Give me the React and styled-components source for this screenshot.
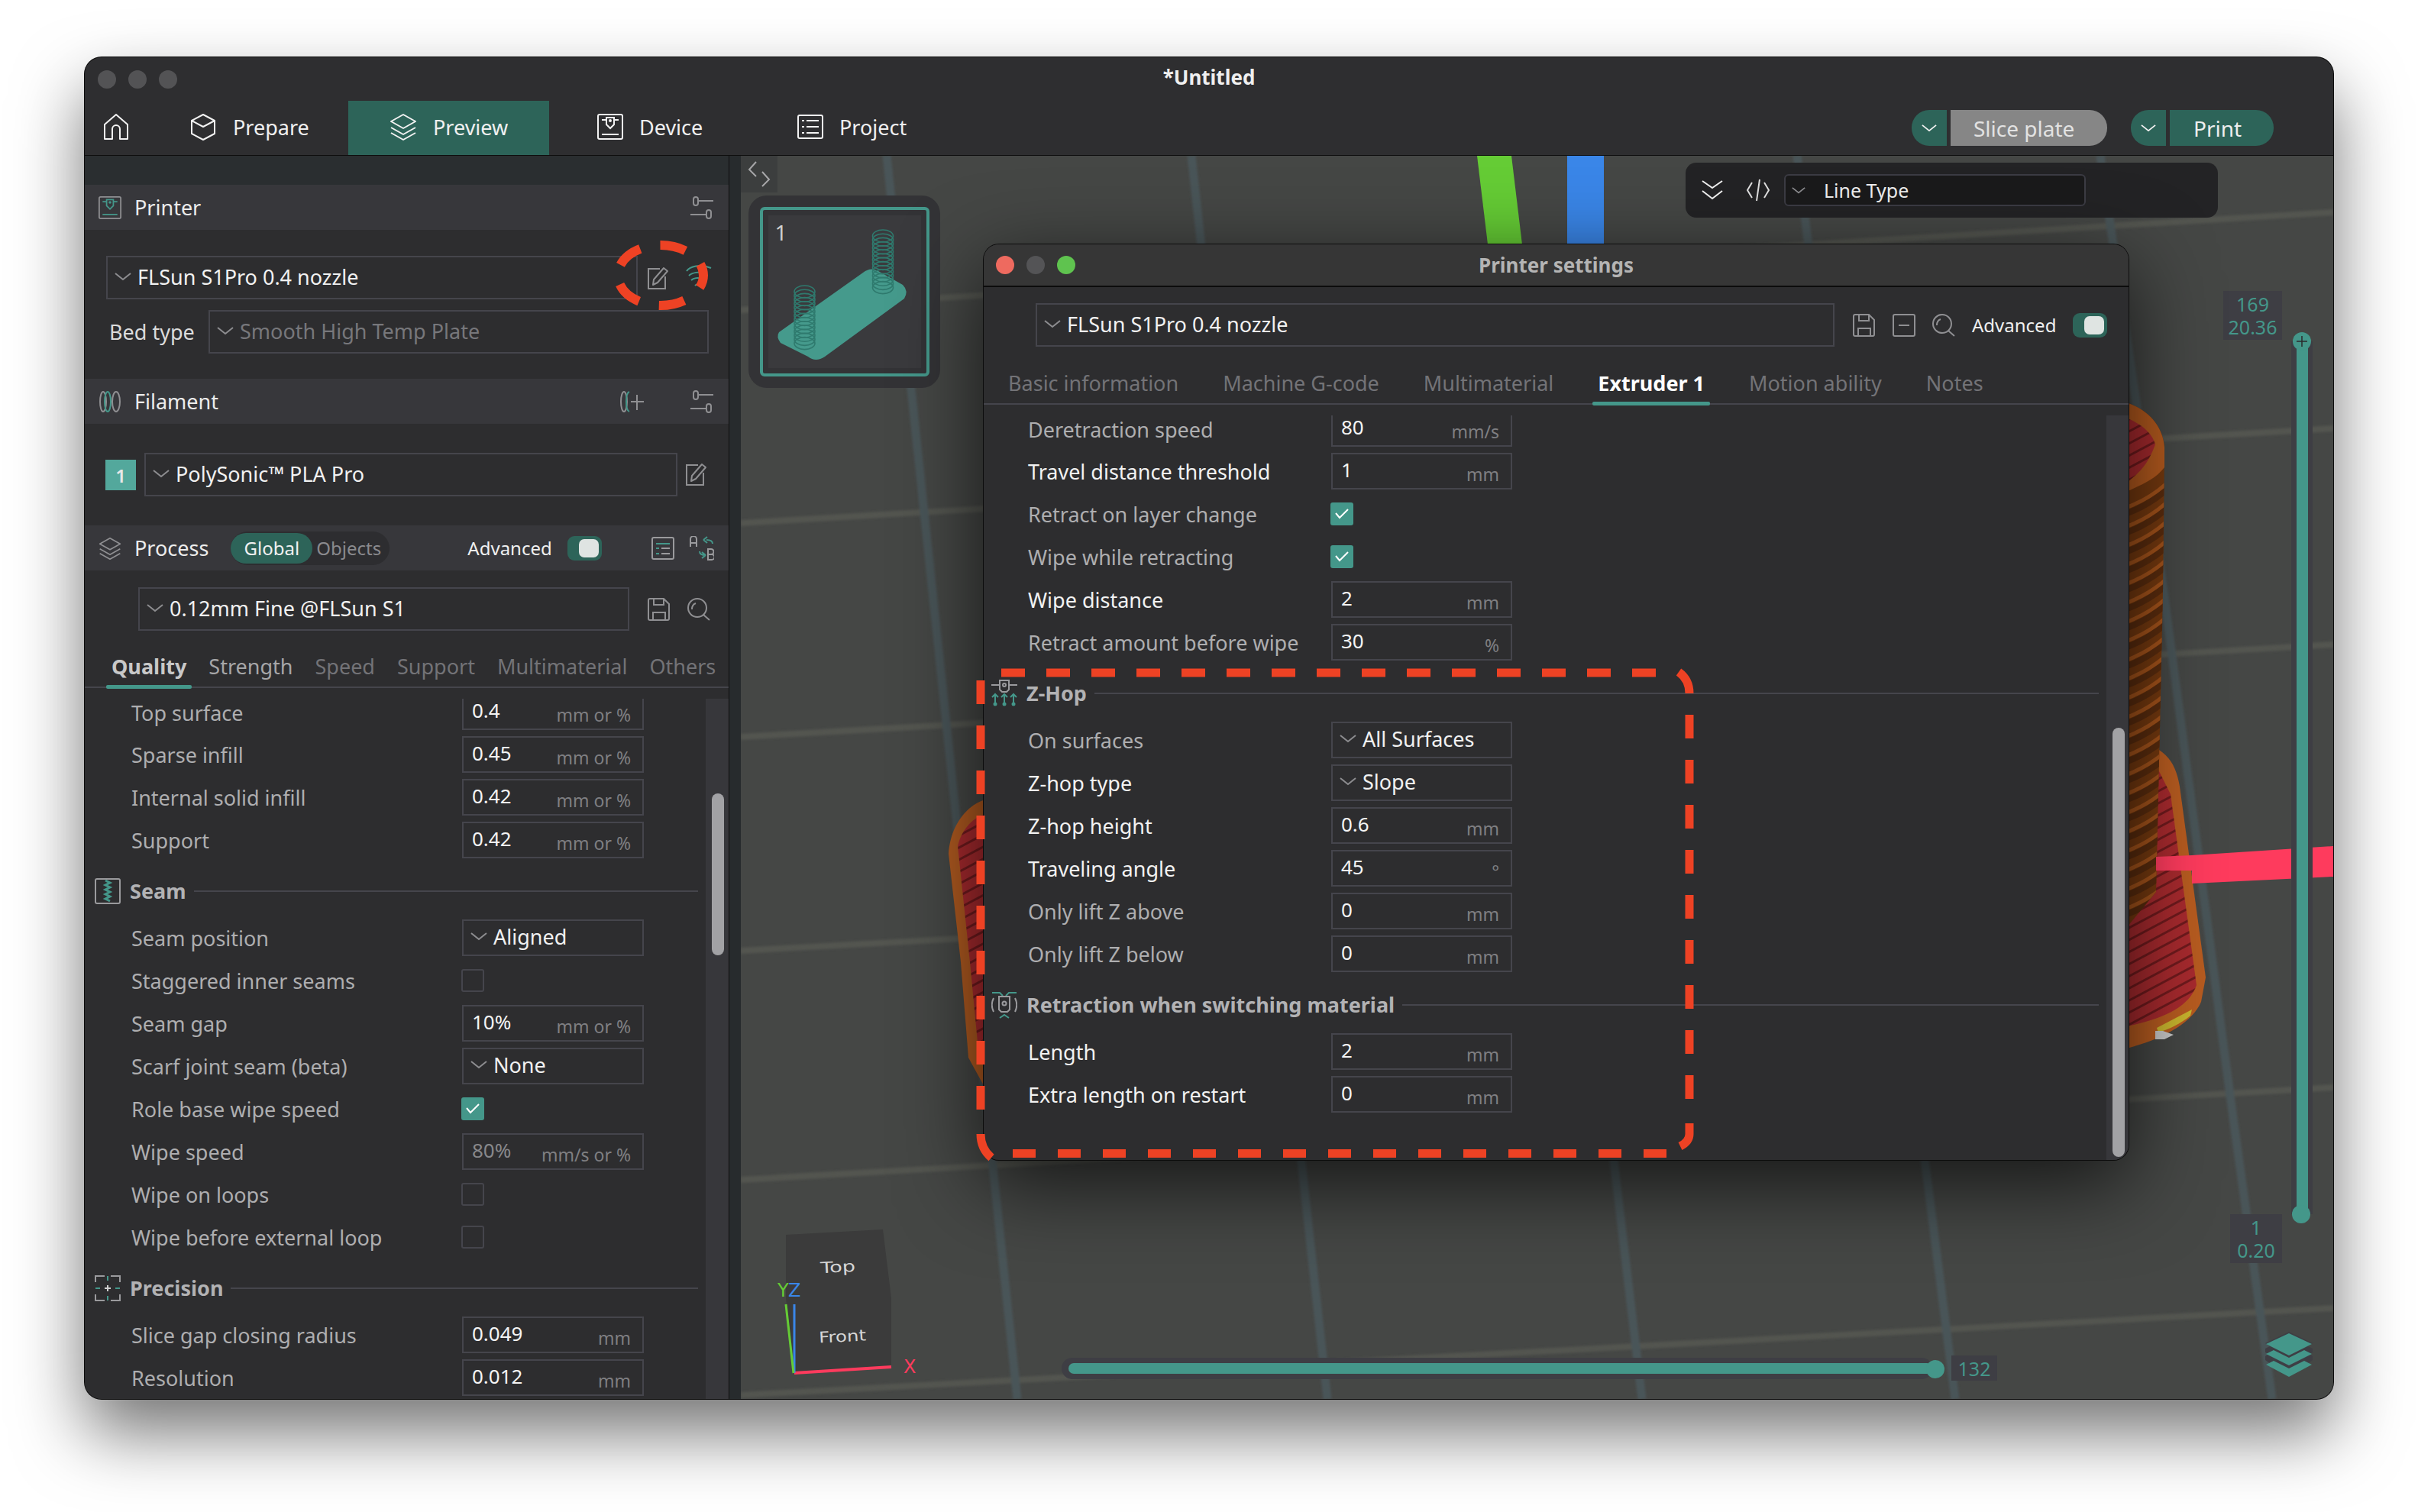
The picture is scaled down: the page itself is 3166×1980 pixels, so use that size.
import React from 'react';
import styled, { createGlobalStyle } from 'styled-components';

const TEAL = '#44978a';
const DEEP_TEAL = '#2d6459';
const LINE = '#45454c';

const GlobalStyle = createGlobalStyle`
  html, body {
    margin: 0;
    background: #fff;
  }
  body {
    font-family: "Noto Sans", "Liberation Sans", sans-serif;
    width: 3166px;
    height: 1980px;
    overflow: hidden;
  }
`;

const Page = styled.div`
  position: relative;
  width: 3166px;
  height: 1980px;
  padding: 75px 111px 148px;
  box-sizing: border-box;
`;

const Window = styled.div`
  height: 100%;
  display: flex;
  flex-direction: column;
  background: #2e2e30;
  border-radius: 22px;
  overflow: hidden;
  box-shadow: 0 0 0 1px #0c0c0c, 0 44px 90px rgba(0, 0, 0, 0.55);
`;

const TitleBar = styled.div`
  height: 57px;
  flex: none;
  display: flex;
  align-items: center;
  position: relative;
  padding-left: 17px;
  gap: 16px;
`;

const TitleText = styled.div`
  position: absolute;
  left: 0;
  right: 0;
  top: 8px;
  text-align: center;
  color: #efefef;
  font-size: 26px;
  font-weight: 700;
`;

const Light = styled.span`
  width: 24px;
  height: 24px;
  border-radius: 50%;
  background: ${(p) => p.$color || '#535355'};
  flex: none;
`;

const Toolbar = styled.div`
  height: 71px;
  flex: none;
  display: flex;
  align-items: stretch;
  border-bottom: 1px solid #0e0e0e;
  padding-left: 23px;
`;

const NavItem = styled.div`
  display: flex;
  align-items: center;
  gap: 21px;
  color: #f0f0f0;
  font-size: 27px;
  width: ${(p) => p.$width}px;
  flex: none;
  box-sizing: border-box;
  padding-left: ${(p) => p.$pad}px;
  padding-bottom: 3px;
  background: ${(p) => (p.$active ? DEEP_TEAL : 'transparent')};
`;

const ToolbarEnd = styled.div`
  margin-left: auto;
  display: flex;
  align-items: center;
  gap: 31px;
  padding-right: 78px;
`;

const SplitButton = styled.div`
  display: flex;
  gap: 5px;
  height: 47px;
`;

const SplitArrow = styled.div`
  width: 46px;
  background: ${DEEP_TEAL};
  border-radius: 23px 0 0 23px;
  display: flex;
  align-items: center;
  justify-content: center;
`;

const SplitLabel = styled.div`
  width: ${(p) => p.$width}px;
  box-sizing: border-box;
  background: ${(p) => (p.$muted ? '#868686' : DEEP_TEAL)};
  color: ${(p) => (p.$muted ? '#e2e2e2' : '#eeeeee')};
  border-radius: 0 23px 23px 0;
  font-size: 28px;
  display: flex;
  align-items: center;
  padding-left: ${(p) => p.$pad}px;
`;

const Main = styled.div`
  flex: 1;
  min-height: 0;
  display: flex;
`;

const Sidebar = styled.div`
  width: 843px;
  flex: none;
  display: flex;
  flex-direction: column;
  background: #2d2d2f;
  border-right: 1px solid #0e0e0e;
  box-sizing: content-box;
`;

const Gutter = styled.div`
  width: 15px;
  flex: none;
  background: #272b2d;
`;

const TopStrip = styled.div`
  height: 38px;
  flex: none;
  background: #2a2e30;
`;

const PanelHeader = styled.div`
  height: 59px;
  flex: none;
  display: flex;
  align-items: center;
  background: #37373b;
  color: #ececec;
  font-size: 27px;
  padding: 0 19px 0 18px;
  gap: 17px;
`;

const HeaderIcons = styled.div`
  margin-left: auto;
  display: flex;
  align-items: center;
  gap: ${(p) => p.$gap || 30}px;
`;

const PrinterBody = styled.div`
  height: 195px;
  flex: none;
  box-sizing: border-box;
  padding: 34px 0 0 28px;
  display: flex;
  flex-direction: column;
  gap: 14px;
`;

const PresetRow = styled.div`
  display: flex;
  align-items: center;
  gap: ${(p) => p.$gap || 0}px;
`;

const SignalSlot = styled.span`
  display: flex;
  margin: -8px 0 0 7px;
`;

const BedLabel = styled.span`
  color: #dcdcdc;
  font-size: 27px;
  width: 130px;
  margin-left: 4px;
  flex: none;
`;

const SelectBox = styled.div`
  width: ${(p) => p.$width}px;
  height: 57px;
  box-sizing: border-box;
  flex: none;
  border: 2px solid ${LINE};
  display: flex;
  align-items: center;
  gap: 8px;
  padding-left: 9px;
  padding-bottom: 3px;
  color: ${(p) => (p.$muted ? '#77777b' : '#f1f1f1')};
  font-size: 27px;
  white-space: nowrap;
`;

const FilamentBody = styled.div`
  height: 133px;
  flex: none;
  box-sizing: border-box;
  padding: 38px 0 0 27px;
  display: flex;
  align-items: flex-start;
`;

const FilamentEdit = styled.span`
  display: flex;
  margin: 13px 0 0 10px;
`;

const Badge = styled.div`
  width: 40px;
  height: 40px;
  margin: 9px 11px 0 0;
  background: #53a89c;
  color: #e8e8e8;
  font-size: 24px;
  font-weight: 600;
  display: flex;
  align-items: center;
  justify-content: center;
`;

const Segmented = styled.div`
  display: flex;
  align-items: center;
  width: 208px;
  height: 44px;
  border-radius: 22px;
  background: #2d2d30;
  font-size: 24px;
  margin-left: 12px;
`;

const SegmentOn = styled.span`
  width: 107px;
  height: 40px;
  border-radius: 20px;
  background: ${DEEP_TEAL};
  color: #f1f1f1;
  display: flex;
  align-items: center;
  justify-content: center;
`;

const SegmentOff = styled.span`
  color: #8a8a8e;
  padding-left: 5px;
`;

const AdvancedText = styled.span`
  color: #f0f0f0;
  font-size: 24px;
  margin-left: ${(p) => p.$gapLeft || 0}px;
`;

const Toggle = styled.span`
  width: 45px;
  height: 32px;
  box-sizing: border-box;
  padding: 4px 4px 4px 15px;
  border-radius: 9px;
  background: ${DEEP_TEAL};
  display: flex;
  margin-left: ${(p) => p.$gapLeft || 0}px;

  &::after {
    content: '';
    flex: 1;
    border-radius: 7px;
    background: #dfe4e2;
  }
`;

const ProcessPreset = styled.div`
  flex: none;
  display: flex;
  align-items: center;
  padding: 22px 0 0 70px;
  gap: 24px;
`;

const PresetIcons = styled.div`
  display: flex;
  align-items: center;
  gap: 22px;
`;

const TabStrip = styled.div`
  flex: none;
  height: ${(p) => p.$height}px;
  box-sizing: border-box;
  display: flex;
  align-items: center;
  gap: ${(p) => p.$gap}px;
  padding-left: ${(p) => p.$pad}px;
  padding-top: ${(p) => p.$top}px;
  border-bottom: 2px solid ${LINE};
  white-space: nowrap;
  font-size: 27px;
`;

const Tab = styled.span`
  position: relative;
  flex: none;
  color: ${(p) => (p.$active ? (p.$bright ? '#ffffff' : '#c8c8c8') : p.$lit ? '#a6a6a8' : '#737377')};
  font-weight: ${(p) => (p.$active ? 700 : 400)};

  &::after {
    content: '';
    display: ${(p) => (p.$active ? 'block' : 'none')};
    position: absolute;
    left: -7px;
    right: -7px;
    bottom: -11px;
    height: 5px;
    background: ${TEAL};
    border-radius: 2px;
  }
`;

const ListFrame = styled.div`
  flex: 1;
  min-height: 0;
  display: flex;
  margin-top: 14px;
`;

const ListBody = styled.div`
  flex: 1;
  min-width: 0;
`;

const ScrollTrack = styled.div`
  width: ${(p) => p.$width}px;
  flex: none;
  background: #37373b;
  position: relative;
`;

const ScrollThumb = styled.div`
  position: absolute;
  left: 8px;
  width: 16px;
  top: ${(p) => p.$top}px;
  height: ${(p) => p.$height}px;
  border-radius: 8px;
  background: #a2a2a5;
`;

const SectionRow = styled.div`
  height: 72px;
  box-sizing: border-box;
  padding: 5px 10px 0 ${(p) => p.$pad}px;
  display: flex;
  align-items: center;
`;

const SectionIcon = styled.span`
  width: 34px;
  flex: none;
  display: flex;
  margin-right: ${(p) => p.$gap}px;
`;

const SectionTitle = styled.span`
  color: #b2b2b4;
  font-size: 27px;
  font-weight: 700;
  white-space: nowrap;
`;

const SectionLine = styled.span`
  flex: 1;
  height: 2px;
  background: ${LINE};
  margin-left: 10px;
`;

/* $open: the row scrolled half out of view at the top of the list */
const Row = styled.div`
  height: ${(p) => (p.$open ? 45 : 56)}px;
  display: grid;
  grid-template-columns: ${(p) => p.$labelWidth}px ${(p) => p.$fieldWidth}px;
  align-items: ${(p) => (p.$open ? 'start' : 'center')};
  padding-left: ${(p) => p.$inset}px;
`;

const RowLabel = styled.span`
  color: ${(p) => (p.$bright ? '#f2f2f2' : '#aeaeb0')};
  font-size: 27px;
  white-space: nowrap;
`;

const Field = styled.div`
  height: ${(p) => (p.$open ? 41 : 48)}px;
  box-sizing: border-box;
  border: 2px solid ${LINE};
  border-top-width: ${(p) => (p.$open ? 0 : 2)}px;
  display: flex;
  align-items: center;
  justify-content: space-between;
  padding: 0 15px ${(p) => (p.$open ? 5 : 0)}px 11px;
`;

const FieldValue = styled.span`
  color: ${(p) => (p.$dim ? '#88888b' : '#f4f4f4')};
  font-size: 26px;
  line-height: 1;
  margin-top: -5px;
`;

const FieldUnit = styled.span`
  color: #7f7f82;
  font-size: 23px;
  margin-top: 7px;
`;

const FieldSelect = styled(Field)`
  justify-content: flex-start;
  gap: 8px;
  padding: 0 0 3px 9px;
  color: #f1f1f1;
  font-size: 27px;
`;

const CheckBox = styled.span`
  width: 30px;
  height: 30px;
  box-sizing: border-box;
  margin-left: -1px;
  border-radius: 3px;
  display: flex;
  align-items: center;
  justify-content: center;
  border: ${(p) => (p.$on ? 'none' : `2px solid ${LINE}`)};
  background: ${(p) => (p.$on ? TEAL : 'transparent')};
`;

const Viewport = styled.div`
  flex: 1;
  min-width: 0;
  position: relative;
  background: #454745;
  overflow: hidden;
`;

const SceneLayer = styled.svg`
  position: absolute;
  inset: 0;
  width: 100%;
  height: 100%;
`;

const CollapseTab = styled.div`
  position: absolute;
  left: 0;
  top: 0;
  width: 48px;
  height: 48px;
  background: #3c3e3e;
  display: flex;
  align-items: center;
  justify-content: center;
`;

const PlateCard = styled.div`
  position: absolute;
  left: 10px;
  top: 52px;
  width: 251px;
  height: 252px;
  background: #333336;
  border-radius: 24px;
  display: flex;
  align-items: center;
  justify-content: center;
`;

const PlateFrame = styled.div`
  width: 222px;
  height: 222px;
  box-sizing: border-box;
  border: 4px solid ${TEAL};
  border-radius: 6px;
  padding: 7px;
  display: flex;
`;

const PlateFill = styled.div`
  flex: 1;
  position: relative;
  background: #3a3a3d;
`;

const PlateNumber = styled.span`
  position: absolute;
  left: 9px;
  top: 3px;
  color: #cfcfcf;
  font-size: 28px;
`;

const PlateArt = styled.svg`
  position: absolute;
  inset: 0;
  width: 100%;
  height: 100%;
`;

const LineTypeBar = styled.div`
  position: absolute;
  left: 1237px;
  top: 9px;
  width: 697px;
  height: 72px;
  background: #232325;
  border-radius: 14px;
  display: flex;
  align-items: center;
  padding-left: 21px;
  box-sizing: border-box;
`;

const LineTypeSelect = styled.div`
  width: 395px;
  height: 42px;
  box-sizing: border-box;
  margin-left: 18px;
  border: 2px solid #3c3c44;
  border-radius: 6px;
  background: #1a1a1b;
  display: flex;
  align-items: center;
  gap: 24px;
  padding-left: 8px;
  color: #efefef;
  font-size: 25px;
`;

const LayerTag = styled.div`
  position: absolute;
  left: ${(p) => p.$left}px;
  top: ${(p) => p.$top}px;
  width: ${(p) => p.$width}px;
  height: ${(p) => p.$height}px;
  background: #3e3e44;
  color: ${TEAL};
  font-size: 25px;
  line-height: 30px;
  text-align: center;
  display: flex;
  flex-direction: column;
  justify-content: center;
`;

const VerticalTrack = styled.div`
  position: absolute;
  left: 2030px;
  top: 243px;
  width: 28px;
  height: 1143px;
  background: #3e3e44;
  display: flex;
  justify-content: center;
`;

const VerticalFill = styled.div`
  width: 15px;
  background: ${TEAL};
`;

const Knob = styled.div`
  position: absolute;
  left: ${(p) => p.$left}px;
  top: ${(p) => p.$top}px;
  width: ${(p) => p.$size}px;
  height: ${(p) => p.$size}px;
  border-radius: 50%;
  background: ${TEAL};
  display: flex;
  align-items: center;
  justify-content: center;
`;

const HorizontalTrack = styled.div`
  position: absolute;
  left: 420px;
  top: 1574px;
  width: 1140px;
  height: 28px;
  border-radius: 14px;
  background: #3e3e44;
  display: flex;
  align-items: center;
  padding-left: 9px;
  box-sizing: border-box;
`;

const HorizontalFill = styled.div`
  flex: 1;
  height: 14px;
  border-radius: 7px;
  background: ${TEAL};
`;

const Dialog = styled.div`
  position: absolute;
  left: 318px;
  top: 116px;
  width: 1499px;
  height: 1199px;
  display: flex;
  flex-direction: column;
  background: #2d2d2f;
  border-radius: 20px;
  overflow: hidden;
  box-shadow: 0 0 0 1px #0c0c0c, 0 30px 110px rgba(0, 0, 0, 0.7);
`;

const DialogTitle = styled.div`
  height: 56px;
  flex: none;
  display: flex;
  align-items: center;
  box-sizing: border-box;
  gap: 16px;
  padding-left: 16px;
  position: relative;
  background: #363636;
  border-bottom: 2px solid #0c0c0c;
`;

const DialogTitleText = styled.div`
  position: absolute;
  left: 0;
  right: 0;
  top: 9px;
  text-align: center;
  color: #b4b4b4;
  font-size: 26px;
  font-weight: 700;
`;

const DialogPreset = styled.div`
  flex: none;
  display: flex;
  align-items: center;
  padding: 21px 0 0 68px;
`;

const DialogTools = styled.div`
  display: flex;
  align-items: center;
  gap: 22px;
  margin-left: 24px;
`;

const ChevronDown = ({ color = '#8d8d90', size = 22 }) => (
  <svg width={size} height={size * 0.5} viewBox="0 0 22 11" fill="none" stroke={color} strokeWidth="2" style={{ flex: 'none' }}>
    <path d="M1 1l10 8 10-8" />
  </svg>
);

const HomeIcon = () => (
  <svg width="36" height="36" viewBox="0 0 36 36" fill="none" stroke="#f2f2f2" strokeWidth="2">
    <path d="M3 15L18 2l15 13v19H23V21a5 5 0 0 0-10 0v13H3z" strokeLinejoin="round" />
  </svg>
);

const CubeIcon = () => (
  <svg width="36" height="36" viewBox="0 0 36 36" fill="none" stroke="#f2f2f2" strokeWidth="2">
    <path d="M18 2l15 8v17l-15 8-15-8V10zM3 10l15 8 15-8" strokeLinejoin="round" />
  </svg>
);

const LayersIcon = ({ color = '#f2f2f2', size = 36 }) => (
  <svg width={size} height={size} viewBox="0 0 36 36" fill="none" stroke={color} strokeWidth="2" style={{ flex: 'none' }}>
    <path d="M18 2l16 9-16 9-16-9zM2 19l16 9 16-9M2 26l16 9 16-9" strokeLinejoin="round" />
  </svg>
);

const DeviceIcon = ({ color = '#f2f2f2', accent = '#f2f2f2', size = 34 }) => (
  <svg width={size} height={size} viewBox="0 0 34 34" fill="none" stroke={color} strokeWidth="2" style={{ flex: 'none' }}>
    <rect x="1" y="1" width="32" height="32" rx="2" />
    <g stroke={accent}>
      <path d="M6 8h6M22 8h6M12 5h10v9l-5 5-5-5zM6 27h22" />
      <circle cx="17" cy="9" r="1" fill={accent} />
    </g>
  </svg>
);

const ProjectIcon = () => (
  <svg width="34" height="32" viewBox="0 0 34 32" fill="none" stroke="#f2f2f2" strokeWidth="2" style={{ flex: 'none' }}>
    <rect x="1" y="1" width="32" height="30" rx="2" />
    <path d="M6 8h3M12 8h16M6 16h3M12 16h16M6 24h3M12 24h16" />
  </svg>
);

const SlidersIcon = () => (
  <svg width="32" height="30" viewBox="0 0 32 30" fill="none" stroke="#8f8f92" strokeWidth="2" style={{ flex: 'none' }}>
    <path d="M11 6h20M1 24h21" />
    <rect x="5" y="1" width="6" height="11" rx="3" fill="#37373b" />
    <rect x="22" y="18" width="6" height="11" rx="3" fill="#37373b" />
  </svg>
);

const SpoolIcon = () => (
  <svg width="30" height="30" viewBox="0 0 30 30" fill="none" strokeWidth="2" style={{ flex: 'none' }}>
    <ellipse cx="6" cy="15" rx="4" ry="13" stroke="#8f8f92" />
    <ellipse cx="12" cy="15" rx="4" ry="13" stroke={TEAL} />
    <ellipse cx="23" cy="15" rx="5" ry="13" stroke="#8f8f92" />
  </svg>
);

const SpoolPlusIcon = () => (
  <svg width="34" height="30" viewBox="0 0 34 30" fill="none" strokeWidth="2" style={{ flex: 'none' }}>
    <ellipse cx="6" cy="15" rx="4" ry="13" stroke="#8f8f92" />
    <path d="M13 2c-3 1-4 6-4 13s1 12 4 13" stroke={TEAL} />
    <path d="M15 15h17M23 6v20" stroke="#8f8f92" />
  </svg>
);

const EditIcon = ({ color = '#8f8f92' }) => (
  <svg width="32" height="30" viewBox="0 0 32 30" fill="none" stroke={color} strokeWidth="2" style={{ flex: 'none' }}>
    <path d="M24 13v16H2V3h15" />
    <path d="M8 24l1-7L22 2l5 4-13 15z" strokeLinejoin="round" />
  </svg>
);

const SignalIcon = () => (
  <svg width="34" height="34" viewBox="0 0 34 34" fill="none" stroke={TEAL} strokeWidth="2" style={{ flex: 'none' }}>
    <path d="M1 12c4-6 18-10 32-4M4 18c4-4 14-6 22-3M7 24c3-3 9-4 14-2M12 31c2-2 5-2 8-1" />
  </svg>
);

const ListIcon = () => (
  <svg width="30" height="30" viewBox="0 0 30 30" fill="none" strokeWidth="2" style={{ flex: 'none' }}>
    <rect x="1" y="1" width="28" height="28" rx="2" stroke="#9a9a9d" />
    <path d="M6 9h18M6 15h4M6 22h4" stroke={TEAL} />
    <path d="M13 15h11M13 22h11" stroke="#9a9a9d" />
  </svg>
);

const CompareIcon = () => (
  <svg width="32" height="32" viewBox="0 0 32 32" fill="none" strokeWidth="2" style={{ flex: 'none' }}>
    <path d="M1 14V4a4 4 0 0 1 8 0v10M1 9h8" stroke="#9a9a9d" />
    <path d="M30 10c0-3-2-5-8-5M18 5l5-4M18 5l5 4M13 20c0 3 3 5 8 5M21 25l-5-4M21 25l-5 4" stroke={TEAL} />
    <path d="M24 17h4a3 3 0 0 1 0 7h-4zM24 24h5a3 3 0 0 1 0 7h-5z" stroke="#9a9a9d" />
  </svg>
);

const SaveIcon = () => (
  <svg width="30" height="30" viewBox="0 0 30 30" fill="none" stroke="#8f8f92" strokeWidth="2" style={{ flex: 'none' }}>
    <path d="M3 1h18l7 7v19a2 2 0 0 1-2 2H3a2 2 0 0 1-2-2V3a2 2 0 0 1 2-2zM8 1v8h13V1M7 29V19h16v10" />
  </svg>
);

const MinusBoxIcon = () => (
  <svg width="30" height="30" viewBox="0 0 30 30" fill="none" stroke="#8f8f92" strokeWidth="2" style={{ flex: 'none' }}>
    <rect x="1" y="1" width="28" height="28" rx="2" />
    <path d="M8 15h14" />
  </svg>
);

const SearchIcon = () => (
  <svg width="30" height="30" viewBox="0 0 30 30" fill="none" stroke="#8f8f92" strokeWidth="2" style={{ flex: 'none' }}>
    <circle cx="13" cy="13" r="12" />
    <path d="M21 22l8 7M6 15c0-4 2-7 5-8" />
  </svg>
);

const CheckMark = () => (
  <svg width="18" height="14" viewBox="0 0 18 14" fill="none" stroke="#fff" strokeWidth="2">
    <path d="M1 6l5 6L17 1" />
  </svg>
);

const SeamIcon = () => (
  <svg width="34" height="34" viewBox="0 0 34 34" fill="none" strokeWidth="2">
    <rect x="1" y="1" width="32" height="32" rx="2" stroke="#9a9a9d" />
    <path d="M14 3l6 3-6 3 6 3-6 3 6 3-6 3 6 3-6 3 6 3" stroke={TEAL} strokeWidth="3" />
  </svg>
);

const PrecisionIcon = () => (
  <svg width="34" height="34" viewBox="0 0 34 34" fill="none" strokeWidth="2">
    <path d="M1 9V1h12M21 1h12v8M33 25v8H21M13 33H1v-8" stroke="#9a9a9d" />
    <path d="M1 17h6M27 17h6M17 1v6M17 27v6" stroke={TEAL} />
    <path d="M13 17h8M17 13v8" stroke="#cfcfcf" />
  </svg>
);

const ZHopIcon = () => (
  <svg width="34" height="36" viewBox="0 0 34 36" fill="none" strokeWidth="2">
    <path d="M0 7h10M24 7h10M11 1h12v12l-3 3h-6l-3-3z" stroke="#9a9a9d" />
    <circle cx="17" cy="7" r="2" stroke="#9a9a9d" />
    <path d="M5 31V19M1 23l4-4 4 4M17 31V19M13 23l4-4 4 4M29 31V19M25 23l4-4 4 4" stroke={TEAL} />
    <circle cx="5" cy="32" r="2.5" fill={TEAL} />
    <circle cx="17" cy="32" r="2.5" fill={TEAL} />
    <circle cx="29" cy="32" r="2.5" fill={TEAL} />
  </svg>
);

const RetractIcon = () => (
  <svg width="34" height="36" viewBox="0 0 34 36" fill="none" strokeWidth="2">
    <path d="M1 2h10l4 4M33 2H23l-4 4M11 35l6-4 6 4" stroke={TEAL} />
    <path d="M3 9c-3 6-3 12 0 18M31 9c3 6 3 12 0 18M10 7h14v17l-3 3h-8l-3-3z" stroke="#9a9a9d" />
    <circle cx="17" cy="16" r="2.5" stroke="#9a9a9d" />
  </svg>
);

const PanelCollapseIcon = () => (
  <svg width="30" height="36" viewBox="0 0 30 36" fill="none" stroke="#a6a6a8" strokeWidth="2">
    <path d="M11 2L2 12l9 9M19 15l9 10-9 9" />
  </svg>
);

const DoubleChevron = () => (
  <svg width="28" height="26" viewBox="0 0 28 26" fill="none" stroke="#f0f0f0" strokeWidth="2" style={{ flex: 'none' }}>
    <path d="M1 1l13 9 13-9M1 14l13 10 13-10" />
  </svg>
);

const CodeIcon = () => (
  <svg width="32" height="30" viewBox="0 0 32 30" fill="none" stroke="#e0e0e0" strokeWidth="2" style={{ flex: 'none', marginLeft: 30 }}>
    <path d="M8 5L2 15l6 10M24 5l6 10-6 10M18 1l-4 28" />
  </svg>
);

const StackBadge = () => (
  <svg width="64" height="64" viewBox="0 0 64 64" style={{ position: 'absolute', left: 1995, top: 1539 }}>
    <path d="M32 1l31 15-6 4 6 3v5l-4 2 4 3v5L32 60 1 38v-5l4-3-4-2v-5l6-3-6-4z" fill="#3e3e44" />
    <path d="M32 3l30 14-30 15L2 17z" fill={TEAL} />
    <path d="M12 25l20 10 20-10 10 5-30 15L2 30z" fill={TEAL} />
    <path d="M12 39l20 10 20-10 10 5-30 16L2 44z" fill={TEAL} />
  </svg>
);

const GRID_ACROSS = [
  [406, 278], [685, 561], [965, 844], [1245, 1130], [1545, 1424], [1827, 1713],
];
const GRID_DEPTH = [
  'M1161 204L1332 1832',
  'M1560 204L1738 1832',
  'M1957 204L2150 1832',
  'M2353 204L2560 1832',
  'M2750 204L2833 775L2920 1435L2975 1832',
];
const COLUMN_BANDS = Array.from({ length: 24 }, (_, i) => 650 + i * 25);

// the part of the print that shows next to the dialog, plus grid and axes
const Scene = () => (
  <SceneLayer viewBox="970 204 2085 1628">
    <defs>
      <pattern id="redHatch" width="40" height="14" patternUnits="userSpaceOnUse" patternTransform="rotate(-28)">
        <rect width="40" height="14" fill="#a82a2e" />
        <rect width="40" height="3" fill="#6f1a1d" />
      </pattern>
      <clipPath id="columnClip">
        <path d="M2780 526C2810 534 2832 556 2834 586L2832 775L2826 1042L2823 1168L2780 1220z" />
      </clipPath>
      <filter id="soft">
        <feGaussianBlur stdDeviation="1.6" />
      </filter>
    </defs>
    <g filter="url(#soft)">
      {GRID_ACROSS.map(([from, to]) => (
        <line key={from} x1="970" y1={from} x2="3055" y2={to} stroke="#53554f" strokeWidth="8" />
      ))}
      {GRID_DEPTH.map((d) => (
        <path key={d} d={d} fill="none" stroke="#4a5558" strokeWidth="11" />
      ))}
    </g>

    <path d="M1934 204h45l14 116h-45z" fill="#65cc35" />
    <path d="M2052 204h48v116h-48z" fill="#3a86e8" />

    <path d="M1290 1047C1262 1056 1244 1085 1242 1118L1258 1260L1268 1385L1290 1425z" fill="#b05a20" />
    <path d="M1290 1066C1270 1072 1258 1090 1254 1108L1270 1260L1280 1365L1290 1395z" fill="url(#redHatch)" />

    <path d="M2827 982C2842 992 2850 1006 2854 1030L2888 1280L2882 1312C2870 1340 2830 1362 2780 1374L2780 982z" fill="#b85c20" />
    <path d="M2822 1000L2842 1040L2876 1290C2866 1320 2830 1335 2780 1345L2780 1000z" fill="url(#redHatch)" />
    <path d="M2824 1346L2870 1322L2868 1330C2856 1340 2840 1348 2826 1352z" fill="#c9b52e" />
    <path d="M2822 1350h10l14 5-12 6h-12z" fill="#c8c8c8" />

    <g clipPath="url(#columnClip)">
      <rect x="2780" y="526" width="60" height="700" fill="#74390f" />
      {COLUMN_BANDS.map((y) => (
        <g key={y} fill="none">
          <path d={`M2780 ${y + 24}Q2815 ${y + 12} 2840 ${y - 12}`} stroke="#5a2c0e" strokeWidth="8" />
          <path d={`M2780 ${y + 16}Q2815 ${y + 4} 2840 ${y - 20}`} stroke="#a4531b" strokeWidth="5" />
        </g>
      ))}
    </g>
    <path d="M2780 526C2810 534 2832 556 2834 586L2834 612C2820 630 2800 636 2780 646z" fill="#b45a1e" />
    <path d="M2780 546C2800 552 2818 566 2822 582C2812 610 2800 620 2780 636z" fill="url(#redHatch)" />

    <path d="M2823 1122L2870 1120L3055 1108V1148L2870 1157V1140L2823 1140z" fill="#fe3b5d" />

    <path d="M1029 1617l127-7 11 90v90l-127 8-11-98z" fill="#3b3b3b" />
    <g fontFamily="DejaVu Sans" fill="#d6d6d6" fontSize="20">
      <text x="1074" y="1666" textLength="46" lengthAdjust="spacingAndGlyphs" transform="rotate(-3 1097 1659)">Top</text>
      <text x="1072" y="1757" textLength="62" lengthAdjust="spacingAndGlyphs" transform="rotate(-3 1103 1750)">Front</text>
    </g>
    <path d="M1040 1798L1167 1790" stroke="#fe3b5d" strokeWidth="4" />
    <path d="M1040 1798L1040 1708" stroke="#3a86e8" strokeWidth="3" />
    <path d="M1039 1798L1029 1708" stroke="#65cc35" strokeWidth="3" />
    <g fontFamily="DejaVu Sans" fontSize="24">
      <text x="1018" y="1698" fill="#65cc35">Y</text>
      <text x="1032" y="1698" fill="#3a86e8">Z</text>
      <text x="1183" y="1798" fill="#fe3b5d">X</text>
    </g>
  </SceneLayer>
);

const PlateThumb = () => (
  <PlateArt viewBox="1006 283 200 200">
    <path d="M1020 436L1130 358Q1140 350 1150 356L1182 374Q1190 382 1184 392L1080 468Q1068 476 1058 468L1022 450Q1016 442 1020 436z" fill="#459a8c" />
    {Array.from({ length: 14 }, (_, i) => (
      <ellipse key={`a${i}`} cx="1053.5" cy={383 + i * 5.2} rx="13.5" ry="8" fill="none" stroke="#2f7a6e" strokeWidth="1.6" />
    ))}
    {Array.from({ length: 14 }, (_, i) => (
      <ellipse key={`b${i}`} cx="1156" cy={310 + i * 5.2} rx="13.5" ry="8" fill="none" stroke="#2f7a6e" strokeWidth="1.6" />
    ))}
  </PlateArt>
);

const SIDE_ROWS_TOP = [
  { label: 'Top surface', value: '0.4', unit: 'mm or %', open: true },
  { label: 'Sparse infill', value: '0.45', unit: 'mm or %' },
  { label: 'Internal solid infill', value: '0.42', unit: 'mm or %' },
  { label: 'Support', value: '0.42', unit: 'mm or %' },
];

const SIDE_ROWS_SEAM = [
  { label: 'Seam position', select: 'Aligned' },
  { label: 'Staggered inner seams', check: false },
  { label: 'Seam gap', value: '10%', unit: 'mm or %' },
  { label: 'Scarf joint seam (beta)', select: 'None' },
  { label: 'Role base wipe speed', check: true },
  { label: 'Wipe speed', value: '80%', unit: 'mm/s or %', dim: true },
  { label: 'Wipe on loops', check: false },
  { label: 'Wipe before external loop', check: false },
];

const SIDE_ROWS_PRECISION = [
  { label: 'Slice gap closing radius', value: '0.049', unit: 'mm' },
  { label: 'Resolution', value: '0.012', unit: 'mm' },
];

const DIALOG_ROWS_TOP = [
  { label: 'Deretraction speed', value: '80', unit: 'mm/s', open: true },
  { label: 'Travel distance threshold', value: '1', unit: 'mm', bright: true },
  { label: 'Retract on layer change', check: true },
  { label: 'Wipe while retracting', check: true },
  { label: 'Wipe distance', value: '2', unit: 'mm', bright: true },
  { label: 'Retract amount before wipe', value: '30', unit: '%' },
];

const DIALOG_ROWS_ZHOP = [
  { label: 'On surfaces', select: 'All Surfaces' },
  { label: 'Z-hop type', select: 'Slope', bright: true },
  { label: 'Z-hop height', value: '0.6', unit: 'mm', bright: true },
  { label: 'Traveling angle', value: '45', unit: '°', bright: true },
  { label: 'Only lift Z above', value: '0', unit: 'mm' },
  { label: 'Only lift Z below', value: '0', unit: 'mm' },
];

const DIALOG_ROWS_RETRACT = [
  { label: 'Length', value: '2', unit: 'mm', bright: true },
  { label: 'Extra length on restart', value: '0', unit: 'mm', bright: true },
];

const SettingRows = ({ rows, inset, labelWidth, fieldWidth }) =>
  rows.map((row) => (
    <Row key={row.label} $open={row.open} $inset={inset} $labelWidth={labelWidth} $fieldWidth={fieldWidth}>
      <RowLabel $bright={row.bright}>{row.label}</RowLabel>
      {row.select && (
        <FieldSelect>
          <ChevronDown />
          {row.select}
        </FieldSelect>
      )}
      {row.value && (
        <Field $open={row.open}>
          <FieldValue $dim={row.dim}>{row.value}</FieldValue>
          <FieldUnit>{row.unit}</FieldUnit>
        </Field>
      )}
      {row.check !== undefined && <CheckBox $on={row.check}>{row.check && <CheckMark />}</CheckBox>}
    </Row>
  ));

const Section = ({ icon, title, pad, gap }) => (
  <SectionRow $pad={pad}>
    <SectionIcon $gap={gap}>{icon}</SectionIcon>
    <SectionTitle>{title}</SectionTitle>
    <SectionLine />
  </SectionRow>
);

const sideProps = { inset: 61, labelWidth: 433, fieldWidth: 238 };
const dialogProps = { inset: 58, labelWidth: 397, fieldWidth: 237 };

const SIDE_TABS = ['Quality', 'Strength', 'Speed', 'Support', 'Multimaterial', 'Others'];
const DIALOG_TABS = ['Basic information', 'Machine G-code', 'Multimaterial', 'Extruder 1', 'Motion ability', 'Notes'];

// red marks drawn over the screenshot, not part of the app
const Annotation = () => (
  <svg width="3166" height="1980" viewBox="0 0 3166 1980" fill="none" stroke="#ee4224" strokeWidth="11" style={{ position: 'absolute', left: 0, top: 0 }}>
    <path d="M1311 881H2172" strokeDasharray="31 28" />
    <path d="M1326 1510.5H2186" strokeDasharray="30 29" />
    <path d="M1284 891V1456" strokeDasharray="31 28" />
    <path d="M2212 936V1442" strokeDasharray="31 28" />
    <path d="M2198 880Q2212 890 2212 908" />
    <path d="M2212 1471V1485Q2212 1495 2200 1501" />
    <path d="M1284 1485Q1284 1504 1298 1516" />
    <ellipse cx="865" cy="360.5" rx="56" ry="39.5" strokeWidth="12" strokeDasharray="34 26.7" strokeDashoffset="17" />
  </svg>
);

export default function App() {
  return (
    <Page>
      <GlobalStyle />
      <Window>
        <TitleBar>
          <Light />
          <Light />
          <Light />
          <TitleText>*Untitled</TitleText>
        </TitleBar>
        <Toolbar>
          <NavItem $width={114} $pad={0}>
            <HomeIcon />
          </NavItem>
          <NavItem $width={208} $pad={0}>
            <CubeIcon />
            Prepare
          </NavItem>
          <NavItem $width={263} $pad={54} $active>
            <LayersIcon />
            Preview
          </NavItem>
          <NavItem $width={325} $pad={63}>
            <DeviceIcon />
            Device
          </NavItem>
          <NavItem $width={200} $pad={0}>
            <ProjectIcon />
            Project
          </NavItem>
          <ToolbarEnd>
            <SplitButton>
              <SplitArrow>
                <ChevronDown color="#f0f0f0" size={20} />
              </SplitArrow>
              <SplitLabel $muted $width={205} $pad={30}>
                Slice plate
              </SplitLabel>
            </SplitButton>
            <SplitButton>
              <SplitArrow>
                <ChevronDown color="#f0f0f0" size={20} />
              </SplitArrow>
              <SplitLabel $width={136} $pad={31}>
                Print
              </SplitLabel>
            </SplitButton>
          </ToolbarEnd>
        </Toolbar>
        <Main>
          <Sidebar>
            <TopStrip />
            <PanelHeader>
              <DeviceIcon color="#8f8f92" accent={TEAL} size={30} />
              Printer
              <HeaderIcons>
                <SlidersIcon />
              </HeaderIcons>
            </PanelHeader>
            <PrinterBody>
              <PresetRow $gap={12}>
                <SelectBox $width={696}>
                  <ChevronDown />
                  FLSun S1Pro 0.4 nozzle
                </SelectBox>
                <EditIcon />
                <SignalSlot>
                  <SignalIcon />
                </SignalSlot>
              </PresetRow>
              <PresetRow>
                <BedLabel>Bed type</BedLabel>
                <SelectBox $width={655} $muted>
                  <ChevronDown />
                  Smooth High Temp Plate
                </SelectBox>
              </PresetRow>
            </PrinterBody>
            <PanelHeader>
              <SpoolIcon />
              Filament
              <HeaderIcons $gap={58}>
                <SpoolPlusIcon />
                <SlidersIcon />
              </HeaderIcons>
            </PanelHeader>
            <FilamentBody>
              <Badge>1</Badge>
              <SelectBox $width={698}>
                <ChevronDown />
                PolySonic™ PLA Pro
              </SelectBox>
              <FilamentEdit>
                <EditIcon />
              </FilamentEdit>
            </FilamentBody>
            <PanelHeader>
              <LayersIcon color="#8f8f92" size={30} />
              Process
              <Segmented>
                <SegmentOn>Global</SegmentOn>
                <SegmentOff>Objects</SegmentOff>
              </Segmented>
              <AdvancedText $gapLeft={85}>Advanced</AdvancedText>
              <Toggle $gapLeft={3} />
              <HeaderIcons $gap={20}>
                <ListIcon />
                <CompareIcon />
              </HeaderIcons>
            </PanelHeader>
            <ProcessPreset>
              <SelectBox $width={643}>
                <ChevronDown />
                0.12mm Fine @FLSun S1
              </SelectBox>
              <PresetIcons>
                <SaveIcon />
                <SearchIcon />
              </PresetIcons>
            </ProcessPreset>
            <TabStrip $height={75} $gap={29} $pad={35} $top={20}>
              {SIDE_TABS.map((t, i) => (
                <Tab key={t} $active={i === 0} $lit={i === 1}>
                  {t}
                </Tab>
              ))}
            </TabStrip>
            <ListFrame>
              <ListBody>
                <SettingRows rows={SIDE_ROWS_TOP} {...sideProps} />
                <Section icon={<SeamIcon />} title="Seam" pad={13} gap={12} />
                <SettingRows rows={SIDE_ROWS_SEAM} {...sideProps} />
                <Section icon={<PrecisionIcon />} title="Precision" pad={13} gap={12} />
                <SettingRows rows={SIDE_ROWS_PRECISION} {...sideProps} />
              </ListBody>
              <ScrollTrack $width={30}>
                <ScrollThumb $top={124} $height={212} />
              </ScrollTrack>
            </ListFrame>
          </Sidebar>
          <Gutter />
          <Viewport>
            <Scene />
            <CollapseTab>
              <PanelCollapseIcon />
            </CollapseTab>
            <PlateCard>
              <PlateFrame>
                <PlateFill>
                  <PlateNumber>1</PlateNumber>
                  <PlateThumb />
                </PlateFill>
              </PlateFrame>
            </PlateCard>
            <LineTypeBar>
              <DoubleChevron />
              <CodeIcon />
              <LineTypeSelect>
                <ChevronDown size={18} />
                Line Type
              </LineTypeSelect>
            </LineTypeBar>
            <LayerTag $left={1941} $top={177} $width={77} $height={64}>
              <span>169</span>
              <span>20.36</span>
            </LayerTag>
            <VerticalTrack>
              <VerticalFill />
            </VerticalTrack>
            <Knob $left={2032} $top={231} $size={24}>
              <svg width="14" height="14" viewBox="0 0 14 14" stroke="#2a2a2c" strokeWidth="1.5">
                <path d="M0 7h14M7 0v14" />
              </svg>
            </Knob>
            <Knob $left={2031} $top={1374} $size={24} />
            <LayerTag $left={1950} $top={1386} $width={68} $height={64}>
              <span>1</span>
              <span>0.20</span>
            </LayerTag>
            <HorizontalTrack>
              <HorizontalFill />
            </HorizontalTrack>
            <Knob $left={1552} $top={1577} $size={24} />
            <LayerTag $left={1585} $top={1571} $width={60} $height={33}>
              <span>132</span>
            </LayerTag>
            <StackBadge />
            <Dialog>
              <DialogTitle>
                <Light $color="#ee6a5f" />
                <Light $color="#545456" />
                <Light $color="#5fc34f" />
                <DialogTitleText>Printer settings</DialogTitleText>
              </DialogTitle>
              <DialogPreset>
                <SelectBox $width={1046}>
                  <ChevronDown />
                  FLSun S1Pro 0.4 nozzle
                </SelectBox>
                <DialogTools>
                  <SaveIcon />
                  <MinusBoxIcon />
                  <SearchIcon />
                  <AdvancedText>Advanced</AdvancedText>
                  <Toggle />
                </DialogTools>
              </DialogPreset>
              <TabStrip $height={76} $gap={58} $pad={32} $top={21}>
                {DIALOG_TABS.map((t) => (
                  <Tab key={t} $active={t === 'Extruder 1'} $bright>
                    {t}
                  </Tab>
                ))}
              </TabStrip>
              <ListFrame>
                <ListBody>
                  <SettingRows rows={DIALOG_ROWS_TOP} {...dialogProps} />
                  <Section icon={<ZHopIcon />} title="Z-Hop" pad={10} gap={12} />
                  <SettingRows rows={DIALOG_ROWS_ZHOP} {...dialogProps} />
                  <Section icon={<RetractIcon />} title="Retraction when switching material" pad={10} gap={12} />
                  <SettingRows rows={DIALOG_ROWS_RETRACT} {...dialogProps} />
                </ListBody>
                <ScrollTrack $width={29}>
                  <ScrollThumb $top={409} $height={562} />
                </ScrollTrack>
              </ListFrame>
            </Dialog>
          </Viewport>
        </Main>
      </Window>
      <Annotation />
    </Page>
  );
}
